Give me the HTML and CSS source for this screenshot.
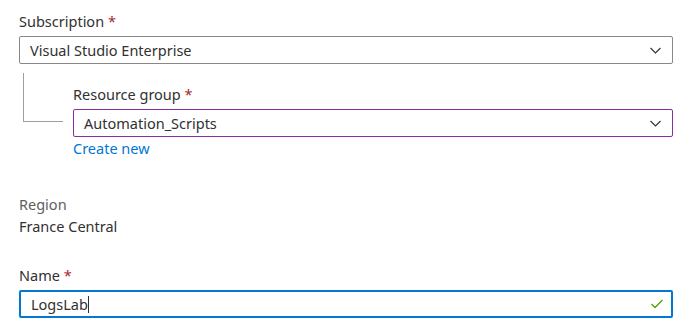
FILE: index.html
```html
<!DOCTYPE html>
<html lang="en">
<head>
    <meta charset="UTF-8">
    <title>Create resource</title>
    <link rel="stylesheet" href="styles.css">
</head>
<body>
    <div class="form">
        <!-- Subscription -->
        <div class="field">
            <label class="field-label">Subscription <span class="required">*</span></label>
            <div class="dropdown">
                <span class="dropdown-value">Visual Studio Enterprise</span>
                <svg class="chevron" width="11" height="7" viewBox="0 0 11 7"><path d="M0.5 1 L5.5 6 L10.5 1" fill="none" stroke="#323130" stroke-width="1.1"/></svg>
            </div>
        </div>

        <!-- Resource group (nested) -->
        <div class="nested">
            <div class="tree-line"></div>
            <div class="field nested-field">
                <label class="field-label">Resource group <span class="required">*</span></label>
                <div class="dropdown focused">
                    <span class="dropdown-value">Automation_Scripts</span>
                    <svg class="chevron" width="11" height="7" viewBox="0 0 11 7"><path d="M0.5 1 L5.5 6 L10.5 1" fill="none" stroke="#323130" stroke-width="1.1"/></svg>
                </div>
                <a class="link" href="#">Create new</a>
            </div>
        </div>

        <!-- Region -->
        <div class="info">
            <div class="info-label">Region</div>
            <div class="info-value">France Central</div>
        </div>

        <!-- Name -->
        <div class="field">
            <label class="field-label">Name <span class="required">*</span></label>
            <div class="textbox">
                <span class="textbox-value">LogsLab</span><span class="caret"></span>
                <svg class="check" width="12" height="10" viewBox="0 0 12 10"><path d="M0.5 5 L4 8.5 L11.5 1" fill="none" stroke="#57a300" stroke-width="1.4"/></svg>
            </div>
        </div>
    </div>
</body>
</html>
```

FILE: styles.css
```css
body {
    margin: 0;
    background: #ffffff;
    color: #323130;
    font-family: "Noto Sans", "Open Sans", sans-serif;
    font-size: 14.5px;
}

.form {
    padding: 11px 12px 0 19px;
}

.field-label {
    display: block;
    line-height: 20px;
    margin-bottom: 5px;
}

.required {
    color: #a4262c;
}

.dropdown,
.textbox {
    display: flex;
    align-items: center;
    justify-content: space-between;
    box-sizing: border-box;
    height: 28px;
    border: 1px solid #8a8886;
    border-radius: 2px;
    padding: 0 11px 0 10px;
}

.dropdown.focused {
    border-color: #8a2da5;
}

.nested {
    display: flex;
    margin-top: 9px;
}

.tree-line {
    width: 39px;
    height: 48px;
    margin-left: 4px;
    border-left: 1px solid #a19f9d;
    border-bottom: 1px solid #a19f9d;
    flex-shrink: 0;
}

.nested-field {
    flex: 1;
    margin-left: 10px;
    padding-top: 11px;
}

.link {
    display: block;
    color: #0078d4;
    text-decoration: none;
    line-height: 20px;
    margin-top: 1px;
}

.info {
    margin-top: 35px;
    line-height: 22px;
}

.info-label {
    color: #605e5c;
}

.field + .field,
.info + .field {
    margin-top: 28px;
}

.textbox {
    border: 2px solid #0078d4;
    padding: 0 8px 0 10px;
    justify-content: flex-start;
}

.textbox-value {
    line-height: 20px;
}

.caret {
    width: 1px;
    height: 17px;
    background: #323130;
}

.check {
    margin-left: auto;
}
```
